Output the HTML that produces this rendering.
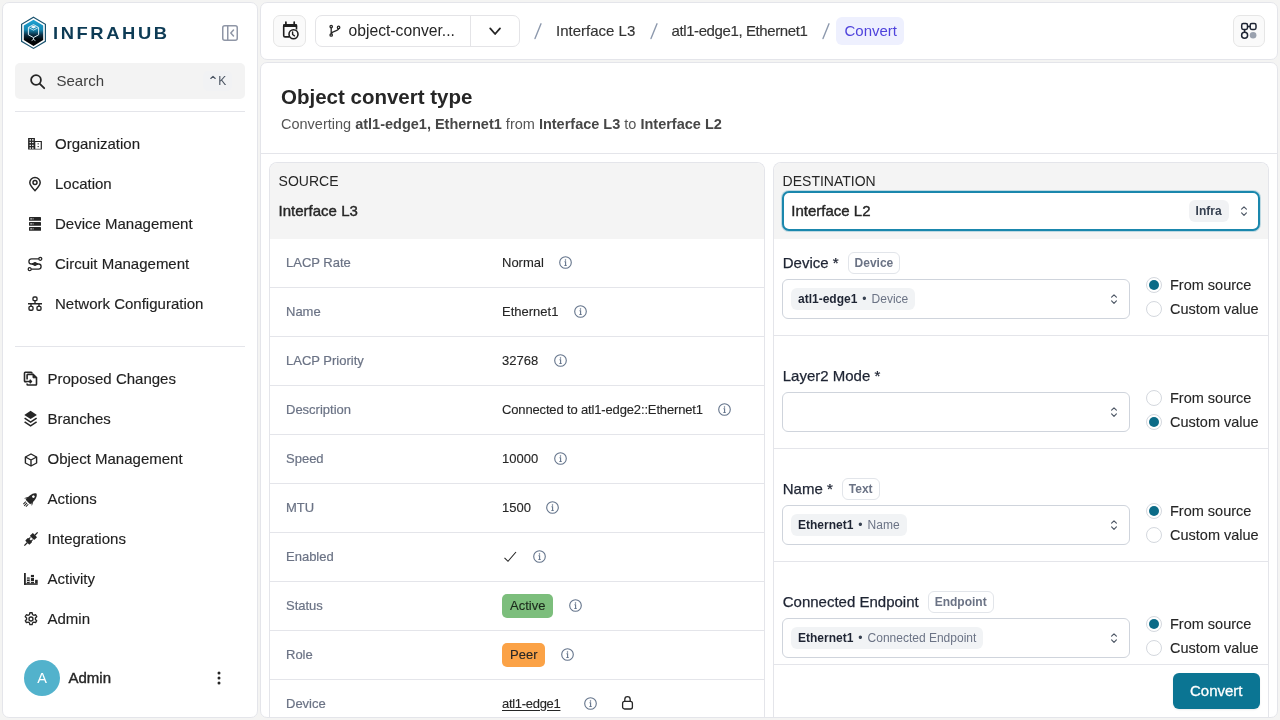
<!DOCTYPE html>
<html><head><meta charset="utf-8">
<style>
*{box-sizing:border-box;margin:0;padding:0}
html,body{width:1280px;height:720px;overflow:hidden;background:#f4f4f3;font-family:"Liberation Sans",sans-serif;color:#262626}
.abs{position:absolute}
#app{position:absolute;left:0;top:0;width:1280px;height:720px;will-change:transform}
.t{position:absolute;white-space:nowrap;line-height:1}
.card{position:absolute;background:#fff;border:1px solid #e4e5ea;border-radius:7px;overflow:hidden}
svg{position:absolute;display:block}
.nav{font-size:15px;color:#1f1f1f;-webkit-text-stroke:0.15px #1f1f1f}
.row{position:absolute;left:0;width:494px;height:49px;border-bottom:1px solid #e4e5ea}
.lbl{position:absolute;left:16px;top:17px;font-size:13px;line-height:1;color:#6b7385;white-space:nowrap;-webkit-text-stroke:0.2px #6b7385}
.val{position:absolute;left:232px;top:-1px;height:48px;font-size:13px;line-height:1;color:#262626;white-space:nowrap;display:flex;align-items:center;-webkit-text-stroke:0.12px #262626}
.info{display:inline-block;width:13px;height:13px;margin-left:15.5px;position:relative;top:0.5px}
.flab{font-size:15px;color:#1e2433;-webkit-text-stroke:0.25px #1e2433}
.fb{position:absolute;height:22px;border:1px solid #e2e5ea;border-radius:6px;background:#fff;font-size:12px;font-weight:bold;color:#6b7385;line-height:20px;padding:0 6px;white-space:nowrap}
.chp{position:absolute;left:791px;height:22px;border-radius:6px;background:#f1f3f5;font-size:12px;line-height:22px;padding:0 7px 0 7px;white-space:nowrap;color:#6b7385}
.chp b{color:#1e2433}
.radio{position:absolute;width:16px;height:16px;border-radius:50%;border:1px solid #d4d8de;background:#fff}
.radio.on::after{content:"";position:absolute;left:2px;top:2px;width:10px;height:10px;border-radius:50%;background:#0b6b87}
.rl{font-size:14.5px;color:#262626;-webkit-text-stroke:0.12px #262626}
.divh{position:absolute;left:0;width:494px;height:1px;background:#e4e5ea}
</style></head>
<body><div id="app">

<!-- SIDEBAR -->
<div class="card" style="left:2px;top:2px;width:256px;height:716px;"></div>
<!-- logo -->
<svg style="left:20px;top:16px" width="28" height="34" viewBox="0 0 28 34">
  <defs>
    <linearGradient id="lg1" x1="0" y1="0" x2="0" y2="1">
      <stop offset="0" stop-color="#1ea3d4"/>
      <stop offset="0.38" stop-color="#1688b3"/>
      <stop offset="0.58" stop-color="#0b2d42"/>
      <stop offset="0.75" stop-color="#02070b"/>
      <stop offset="1" stop-color="#000"/>
    </linearGradient>
  </defs>
  <path d="M13.5 1.2 L25.4 8.3 V25.3 L13.5 32.4 L1.6 25.3 V8.3 Z" fill="#fff" stroke="#1b5470" stroke-width="1.2"/>
  <path d="M13.5 3.7 L23.2 9.5 V24.1 L13.5 29.9 L3.8 24.1 V9.5 Z" fill="url(#lg1)"/>
  <path d="M13.5 8.6 L18.6 11.4 V18.8 L13.5 21.6 L8.4 18.8 V11.4 Z" fill="none" stroke="#dceef5" stroke-width="1"/>
  <path d="M8.4 11.4 L13.5 14.2 L18.6 11.4" fill="none" stroke="#dceef5" stroke-width="0.8"/>
  <path d="M10.6 10.9 L13.5 9.4 L16.4 10.9 L13.5 12.4 Z" fill="#f0f8fb"/>
  <path d="M13.5 21.6 V23.6 M11.6 24.6 L13.5 23.4 L15.4 24.6" fill="none" stroke="#dceef5" stroke-width="0.9"/>
</svg>
<div class="t" style="left:53px;top:24.5px;font-size:17px;font-weight:bold;letter-spacing:2.4px;color:#0d3b55;transform:scaleX(1.08);transform-origin:0 0">INFRAHUB</div>
<!-- collapse -->
<svg style="left:221px;top:24px" width="18" height="18" viewBox="0 0 18 18" fill="none" stroke="#8f96a6" stroke-width="1.5">
  <rect x="1.75" y="1.75" width="14.5" height="14.5" rx="2"/>
  <path d="M6.75 1.75 V16.25"/>
  <path d="M12.5 6 L9.8 9 L12.5 12" stroke-linecap="round" stroke-linejoin="round"/>
</svg>
<!-- search -->
<div class="abs" style="left:15px;top:63px;width:230px;height:36px;background:#f3f3f3;border-radius:5px"></div>
<svg style="left:29px;top:73px" width="17" height="17" viewBox="0 0 17 17" fill="none" stroke="#262626" stroke-width="1.8">
  <circle cx="7" cy="7" r="4.9"/>
  <path d="M10.6 10.6 L15.2 15.2" stroke-linecap="round"/>
</svg>
<div class="t" style="left:56.5px;top:73.3px;font-size:15px;color:#404040">Search</div>
<div class="abs" style="left:203px;top:71px;width:29px;height:20px;background:#f1f2f4;border-radius:5px"></div>
<svg style="left:209px;top:74px" width="8" height="6" viewBox="209 74 8 6" fill="none" stroke="#4b5563" stroke-width="1.15" stroke-linecap="round" stroke-linejoin="round"><path d="M210.8 78.5 L213 76.3 L215.2 78.5"/></svg>
<div class="t" style="left:218.3px;top:74.6px;font-size:12px;color:#4b5563">K</div>
<div class="abs" style="left:15px;top:111px;width:230px;height:1px;background:#e4e5ea"></div>

<!-- nav top -->
<svg style="left:27px;top:137px" width="16" height="14" viewBox="27 137 16 14">
  <path d="M28.1 137.9 H34.9 V140.9 H41.9 V149.6 H28.1 Z" fill="#262626"/>
  <rect x="35.3" y="142" width="5.4" height="6.8" fill="#fff"/>
  <g fill="#fff">
    <rect x="29.6" y="139.1" width="1.3" height="1.5"/><rect x="32.1" y="139.1" width="1.4" height="1.5"/>
    <rect x="29.6" y="141.9" width="1.3" height="1.2"/><rect x="32.1" y="141.9" width="1.4" height="1.2"/>
    <rect x="29.6" y="144.7" width="1.3" height="1.3"/><rect x="32.1" y="144.7" width="1.4" height="1.3"/>
    <rect x="29.6" y="147.3" width="1.3" height="1.5"/><rect x="32.1" y="147.3" width="1.4" height="1.5"/>
  </g>
  <rect x="37.6" y="143.3" width="1.2" height="1.1" fill="#262626"/><rect x="37.6" y="146" width="1.2" height="1.1" fill="#262626"/>
</svg>
<div class="t nav" style="left:55px;top:136.1px">Organization</div>

<svg style="left:28px;top:176px" width="14" height="16" viewBox="0 0 14 16" fill="none" stroke="#262626" stroke-width="1.5">
  <path d="M7 14.6 C4.8 12.4 1.8 9.6 1.8 6.6 A5.2 5.2 0 0 1 12.2 6.6 C12.2 9.6 9.2 12.4 7 14.6 Z" stroke-linejoin="round"/>
  <circle cx="7" cy="6.6" r="2"/>
</svg>
<div class="t nav" style="left:55px;top:176.1px">Location</div>

<svg style="left:29px;top:216px" width="12" height="16" viewBox="0 0 12 16">
  <g fill="#262626"><rect x="0" y="1" width="12" height="3.8" rx="0.6"/><rect x="0" y="6" width="12" height="3.8" rx="0.6"/><rect x="0" y="11" width="12" height="3.8" rx="0.6"/></g>
  <g fill="#fff"><rect x="1.3" y="2.4" width="1.6" height="1"/><rect x="3.6" y="2.4" width="0.9" height="1"/><rect x="1.3" y="7.4" width="1.6" height="1"/><rect x="3.6" y="7.4" width="0.9" height="1"/><rect x="1.3" y="12.4" width="1.6" height="1"/><rect x="3.6" y="12.4" width="0.9" height="1"/></g>
</svg>
<div class="t nav" style="left:55px;top:216.1px">Device Management</div>

<svg style="left:27px;top:256px" width="16" height="16" viewBox="0 0 16 16" fill="none" stroke="#262626" stroke-width="1.3">
  <circle cx="13.3" cy="2.8" r="1.5"/>
  <circle cx="2.7" cy="13.2" r="1.5"/>
  <path d="M11.8 2.8 H4.5 A2.6 2.6 0 0 0 4.5 8 H11.5 A2.6 2.6 0 0 1 11.5 13.2 H4.2"/>
  <circle cx="8" cy="8" r="1.4" fill="#262626"/>
  <path d="M5 8 H11" stroke-width="1.8"/>
</svg>
<div class="t nav" style="left:55px;top:256.1px">Circuit Management</div>

<svg style="left:27px;top:296px" width="16" height="16" viewBox="0 0 16 16" fill="none" stroke="#262626" stroke-width="1.4">
  <rect x="6" y="1" width="4" height="3.6" rx="1.2"/>
  <path d="M8 4.6 V7.7 M1 7.7 H15 M4 7.7 V10 M12 7.7 V10"/>
  <rect x="2" y="10.4" width="4" height="3.8" rx="1.2"/>
  <rect x="10" y="10.4" width="4" height="3.8" rx="1.2"/>
</svg>
<div class="t nav" style="left:55px;top:296.1px">Network Configuration</div>

<div class="abs" style="left:15px;top:346px;width:230px;height:1px;background:#e4e5ea"></div>

<!-- nav bottom -->
<svg style="left:22px;top:370px" width="17" height="18" viewBox="22 370 17 18" fill="none" stroke="#262626" stroke-width="1.6">
  <path d="M31.9 373.4 V372.9 Q31.9 372.2 31.2 372.2 H25.2 Q24.5 372.2 24.5 372.9 V381.1 Q24.5 381.8 25.2 381.8 H26.6"/>
  <path d="M27.1 379.6 V375.1 Q27.1 374.4 27.8 374.4 H33.1 L36.5 377.6 V384.3 Q36.5 385 35.8 385 H27.8 Q27.1 385 27.1 384.3 V383.4"/>
  <path d="M33 374.4 L36.5 377.8 H33 Z" fill="#262626" stroke-width="1"/>
  <path d="M25.2 381.5 H31.4 M29.7 379.7 L31.5 381.5 L29.7 383.3" stroke-width="1.5" stroke-linejoin="round"/>
</svg>
<div class="t nav" style="left:47.5px;top:371.1px">Proposed Changes</div>

<svg style="left:22px;top:409px" width="17" height="19" viewBox="22 409 17 19">
  <path d="M30.6 410.8 L36.9 414.9 L30.6 419 L24.3 414.9 Z" fill="#262626"/>
  <path d="M24.6 418.2 L30.6 422.1 L36.6 418.2 M24.6 421.9 L30.6 425.8 L36.6 421.9" fill="none" stroke="#262626" stroke-width="1.6" stroke-linejoin="miter"/>
</svg>
<div class="t nav" style="left:47.5px;top:411.1px">Branches</div>

<svg style="left:24px;top:453px" width="14" height="14" viewBox="0 0 14 14" fill="none" stroke="#262626" stroke-width="1.4" stroke-linejoin="round">
  <path d="M7 1 L12.6 4 V10 L7 13 L1.4 10 V4 Z"/>
  <path d="M1.4 4 L7 7 L12.6 4 M7 7 V13"/>
</svg>
<div class="t nav" style="left:47.5px;top:451.1px">Object Management</div>

<svg style="left:22px;top:490px" width="18" height="18" viewBox="-9 -9 18 18">
  <g transform="rotate(-45)">
    <path d="M-4.4 -3.2 C1 -3.9 6.2 -3.4 7.8 0 C6.2 3.4 1 3.9 -4.4 3.2 Z" fill="#262626"/>
    <circle cx="3.4" cy="0" r="1.35" fill="#fff"/>
    <path d="M-2.6 -3 L-4.4 -5.6 L-0.2 -3.5 Z M-2.6 3 L-4.4 5.6 L-0.2 3.5 Z" fill="#262626"/>
    <path d="M-5.6 -1.8 H-9 M-5.6 0 H-9.6 M-5.6 1.8 H-9" stroke="#262626" stroke-width="1"/>
  </g>
</svg>
<div class="t nav" style="left:47.5px;top:491.1px">Actions</div>

<svg style="left:22px;top:530px" width="18" height="18" viewBox="-9 -9 18 18">
  <g transform="rotate(-45)" fill="#262626">
    <rect x="-9.4" y="-0.65" width="4.4" height="1.3"/>
    <rect x="-5.2" y="-2.9" width="4" height="5.8" rx="0.4"/>
    <rect x="-1.4" y="-2.2" width="2.2" height="1.2"/>
    <rect x="-1.4" y="1" width="2.2" height="1.2"/>
    <rect x="1.4" y="-3" width="4.2" height="6" rx="0.4"/>
    <rect x="5.4" y="-0.65" width="4" height="1.3"/>
  </g>
</svg>
<div class="t nav" style="left:47.5px;top:531.1px">Integrations</div>

<svg style="left:23px;top:572px" width="16" height="14" viewBox="23 572 16 14" fill="#262626">
  <rect x="24" y="573" width="1.8" height="11.8"/>
  <rect x="24" y="583.3" width="13.7" height="1.5"/>
  <rect x="26.9" y="577.4" width="2.8" height="6"/>
  <rect x="30.9" y="574.9" width="3.1" height="8.5"/>
  <rect x="35.1" y="579.8" width="2.6" height="3.6"/>
  <g fill="#fff"><rect x="26.9" y="578.7" width="2.8" height="0.8"/><rect x="26.9" y="581.1" width="2.8" height="0.8"/><rect x="30.9" y="577.2" width="3.1" height="0.8"/><rect x="30.9" y="581" width="3.1" height="0.8"/></g>
</svg>
<div class="t nav" style="left:47.5px;top:571.1px">Activity</div>

<svg style="left:23px;top:611px" width="16" height="16" viewBox="0 0 24 24" fill="none" stroke="#262626" stroke-width="2">
  <path d="M10.3 2.6 h3.4 l0.6 2.7 a7.5 7.5 0 0 1 2 1.15 l2.6 -0.85 l1.7 2.95 l-2.05 1.85 a7.5 7.5 0 0 1 0 2.3 l2.05 1.85 l-1.7 2.95 l-2.6 -0.85 a7.5 7.5 0 0 1 -2 1.15 l-0.6 2.7 h-3.4 l-0.6 -2.7 a7.5 7.5 0 0 1 -2 -1.15 l-2.6 0.85 l-1.7 -2.95 l2.05 -1.85 a7.5 7.5 0 0 1 0 -2.3 l-2.05 -1.85 l1.7 -2.95 l2.6 0.85 a7.5 7.5 0 0 1 2 -1.15 Z" stroke-linejoin="round"/>
  <circle cx="12" cy="12" r="3"/>
</svg>
<div class="t nav" style="left:47.5px;top:611.1px">Admin</div>

<!-- user -->
<div class="abs" style="left:24px;top:660px;width:36px;height:36px;border-radius:50%;background:#52b2cc"></div>
<div class="t" style="left:24px;top:671px;width:36px;text-align:center;font-size:14.5px;color:#fff">A</div>
<div class="t" style="left:68.5px;top:670.4px;font-size:15px;color:#262626;-webkit-text-stroke:0.4px #262626">Admin</div>
<svg style="left:216px;top:670px" width="6" height="16" viewBox="0 0 6 16" fill="#262626">
  <circle cx="3" cy="3" r="1.5"/><circle cx="3" cy="8" r="1.5"/><circle cx="3" cy="13" r="1.5"/>
</svg>


<!-- HEADER -->
<div class="card" style="left:260px;top:2px;width:1018px;height:58px;"></div>
<!-- header -->
<div class="abs" style="left:273px;top:15px;width:33px;height:32px;border:1px solid #e6e6e6;border-radius:7px;background:#fafafa"></div>
<svg style="left:280px;top:20px" width="20" height="21" viewBox="280 20 20 21" fill="none" stroke="#1f1f1f" stroke-width="1.6">
  <path d="M289.5 36.9 H285.1 A1.4 1.4 0 0 1 283.7 35.5 V26.2 A1.4 1.4 0 0 1 285.1 24.8 H295.1 A1.4 1.4 0 0 1 296.5 26.2 V29.5"/>
  <rect x="283" y="24.2" width="14.2" height="2.9" fill="#1f1f1f" stroke="none" rx="0.8"/>
  <path d="M285.9 22 V24.6 M294.2 22 V24.6" stroke-width="1.7" stroke-linecap="round"/>
  <circle cx="293.5" cy="34.2" r="4.5" fill="#fafafa"/>
  <path d="M292.6 32 V34.5 L294.5 35.8" stroke-width="1.4" stroke-linecap="round" stroke-linejoin="round"/>
</svg>

<div class="abs" style="left:315px;top:15px;width:205px;height:32px;border:1px solid #e4e4e7;border-radius:7px;background:#fff"></div>
<div class="abs" style="left:470px;top:16px;width:1px;height:30px;background:#e4e4e7"></div>
<svg style="left:328px;top:24px" width="14" height="14" viewBox="328 24 14 14" fill="none" stroke="#262626" stroke-width="1.3" stroke-linecap="round">
  <circle cx="331.2" cy="26.6" r="1.2"/>
  <circle cx="331.2" cy="35" r="1.2"/>
  <circle cx="338.6" cy="27.4" r="1.2"/>
  <path d="M331.2 27.8 V33.8 M338.6 28.6 C338.6 31.4 332 30.8 331.4 33.6"/>
</svg>
<div class="t" style="left:348.5px;top:22.6px;font-size:15.7px;color:#262626">object-conver...</div>
<svg style="left:488px;top:26px" width="14" height="10" viewBox="0 0 14 10" fill="none" stroke="#262626" stroke-width="1.8" stroke-linecap="round" stroke-linejoin="round">
  <path d="M2.2 2.4 L7.1 8 L12 2.4"/>
</svg>

<svg style="left:533px;top:22px" width="10" height="18" viewBox="0 0 10 18" fill="none" stroke="#8d99ad" stroke-width="1.4" stroke-linecap="round"><path d="M8 1.8 L2 16.6"/></svg>
<div class="t" style="left:556px;top:23.1px;font-size:15px;color:#333;-webkit-text-stroke:0.15px #333">Interface L3</div>
<svg style="left:649px;top:22px" width="10" height="18" viewBox="0 0 10 18" fill="none" stroke="#8d99ad" stroke-width="1.4" stroke-linecap="round"><path d="M8 1.8 L2 16.6"/></svg>
<div class="t" style="left:671.5px;top:23.1px;font-size:15px;letter-spacing:-0.4px;color:#333;-webkit-text-stroke:0.15px #333">atl1-edge1, Ethernet1</div>
<svg style="left:821px;top:22px" width="10" height="18" viewBox="0 0 10 18" fill="none" stroke="#8d99ad" stroke-width="1.4" stroke-linecap="round"><path d="M8 1.8 L2 16.6"/></svg>
<div class="abs" style="left:836px;top:17px;width:68px;height:28px;border-radius:6px;background:#eef0fe"></div>
<div class="t" style="left:844.5px;top:23.1px;font-size:15px;color:#4f43dc">Convert</div>

<div class="abs" style="left:1233px;top:15px;width:32px;height:32px;border:1px solid #e6e6e6;border-radius:7px;background:#fafafa"></div>
<svg style="left:1240px;top:22px" width="18" height="18" viewBox="0 0 18 18" fill="none" stroke="#1e2433" stroke-width="1.5">
  <rect x="1.7" y="1.6" width="5.8" height="5.8" rx="1.6"/>
  <rect x="10.2" y="1.6" width="5.8" height="5.8" rx="1.6"/>
  <path d="M7.5 4.5 H10.2 M4.6 7.4 V10"/>
  <circle cx="4.6" cy="13.3" r="3"/>
  <circle cx="13.1" cy="13.2" r="3.3" fill="#9aa1ae" stroke="none"/>
</svg>


<!-- MAIN -->
<div class="card" style="left:260px;top:62px;width:1018px;height:656px;"></div>
<!-- main header -->
<div class="t" style="left:281px;top:86.7px;font-size:20.5px;font-weight:bold;color:#262626">Object convert type</div>
<div class="t" style="left:281px;top:116.6px;font-size:14.5px;color:#555">Converting <b style="color:#474747">atl1-edge1, Ethernet1</b> from <b style="color:#474747">Interface L3</b> to <b style="color:#474747">Interface L2</b></div>
<div class="abs" style="left:261px;top:153px;width:1016px;height:1px;background:#e4e5ea"></div>
<!-- source panel -->
<div class="abs" style="left:269px;top:162px;width:496px;height:555px;border:1px solid #e4e5ea;border-bottom:none;border-radius:8px 8px 0 0;background:#fff;overflow:hidden">
  <div class="abs" style="left:0;top:0;width:494px;height:76px;background:#f4f4f4"></div>
  <div class="t" style="left:8.6px;top:11.15px;font-size:14px;color:#262626">SOURCE</div>
  <div class="t" style="left:8.6px;top:40.1px;font-size:15px;color:#262626;-webkit-text-stroke:0.4px #262626">Interface L3</div>

  <div class="row" style="top:76px"><div class="lbl">LACP Rate</div><div class="val">Normal<svg class="info" viewBox="0 0 13 13" style="position:relative;display:inline-block" fill="none" stroke="#64748b" stroke-width="1.1"><circle cx="6.5" cy="6.5" r="5.8"/><path d="M5.5 5.7 H6.6 V9.5 M5.4 9.5 H7.7" stroke-width="1.1"/><circle cx="6.5" cy="3.9" r="0.5" fill="#64748b" stroke="#64748b" stroke-width="0.5"/></svg></div></div>
  <div class="row" style="top:125px"><div class="lbl">Name</div><div class="val">Ethernet1<svg class="info" viewBox="0 0 13 13" style="position:relative;display:inline-block" fill="none" stroke="#64748b" stroke-width="1.1"><circle cx="6.5" cy="6.5" r="5.8"/><path d="M5.5 5.7 H6.6 V9.5 M5.4 9.5 H7.7" stroke-width="1.1"/><circle cx="6.5" cy="3.9" r="0.5" fill="#64748b" stroke="#64748b" stroke-width="0.5"/></svg></div></div>
  <div class="row" style="top:174px"><div class="lbl">LACP Priority</div><div class="val">32768<svg class="info" viewBox="0 0 13 13" style="position:relative;display:inline-block" fill="none" stroke="#64748b" stroke-width="1.1"><circle cx="6.5" cy="6.5" r="5.8"/><path d="M5.5 5.7 H6.6 V9.5 M5.4 9.5 H7.7" stroke-width="1.1"/><circle cx="6.5" cy="3.9" r="0.5" fill="#64748b" stroke="#64748b" stroke-width="0.5"/></svg></div></div>
  <div class="row" style="top:223px"><div class="lbl">Description</div><div class="val"><span style="letter-spacing:-0.15px">Connected to atl1-edge2::Ethernet1</span><svg class="info" viewBox="0 0 13 13" style="position:relative;display:inline-block" fill="none" stroke="#64748b" stroke-width="1.1"><circle cx="6.5" cy="6.5" r="5.8"/><path d="M5.5 5.7 H6.6 V9.5 M5.4 9.5 H7.7" stroke-width="1.1"/><circle cx="6.5" cy="3.9" r="0.5" fill="#64748b" stroke="#64748b" stroke-width="0.5"/></svg></div></div>
  <div class="row" style="top:272px"><div class="lbl">Speed</div><div class="val">10000<svg class="info" viewBox="0 0 13 13" style="position:relative;display:inline-block" fill="none" stroke="#64748b" stroke-width="1.1"><circle cx="6.5" cy="6.5" r="5.8"/><path d="M5.5 5.7 H6.6 V9.5 M5.4 9.5 H7.7" stroke-width="1.1"/><circle cx="6.5" cy="3.9" r="0.5" fill="#64748b" stroke="#64748b" stroke-width="0.5"/></svg></div></div>
  <div class="row" style="top:321px"><div class="lbl">MTU</div><div class="val">1500<svg class="info" viewBox="0 0 13 13" style="position:relative;display:inline-block" fill="none" stroke="#64748b" stroke-width="1.1"><circle cx="6.5" cy="6.5" r="5.8"/><path d="M5.5 5.7 H6.6 V9.5 M5.4 9.5 H7.7" stroke-width="1.1"/><circle cx="6.5" cy="3.9" r="0.5" fill="#64748b" stroke="#64748b" stroke-width="0.5"/></svg></div></div>
  <div class="row" style="top:370px"><div class="lbl">Enabled</div><div class="val"><svg width="14" height="12" viewBox="0 0 14 12" style="position:relative;display:inline-block;top:1px;margin-left:1px" fill="none" stroke="#262626" stroke-width="1.1"><path d="M1.5 6.8 L5 10.3 L13 1"/></svg><svg class="info" viewBox="0 0 13 13" style="position:relative;display:inline-block" fill="none" stroke="#64748b" stroke-width="1.1"><circle cx="6.5" cy="6.5" r="5.8"/><path d="M5.5 5.7 H6.6 V9.5 M5.4 9.5 H7.7" stroke-width="1.1"/><circle cx="6.5" cy="3.9" r="0.5" fill="#64748b" stroke="#64748b" stroke-width="0.5"/></svg></div></div>
  <div class="row" style="top:419px"><div class="lbl">Status</div><div class="val"><span style="display:inline-block;background:#7cbe7c;border-radius:5px;padding:0 8px;height:24px;line-height:24px;color:#1a2a1a;position:relative;top:1px">Active</span><svg class="info" viewBox="0 0 13 13" style="position:relative;display:inline-block" fill="none" stroke="#64748b" stroke-width="1.1"><circle cx="6.5" cy="6.5" r="5.8"/><path d="M5.5 5.7 H6.6 V9.5 M5.4 9.5 H7.7" stroke-width="1.1"/><circle cx="6.5" cy="3.9" r="0.5" fill="#64748b" stroke="#64748b" stroke-width="0.5"/></svg></div></div>
  <div class="row" style="top:468px"><div class="lbl">Role</div><div class="val"><span style="display:inline-block;background:#fba246;border-radius:5px;padding:0 8px;height:24px;line-height:24px;color:#262626;position:relative;top:1px">Peer</span><svg class="info" viewBox="0 0 13 13" style="position:relative;display:inline-block" fill="none" stroke="#64748b" stroke-width="1.1"><circle cx="6.5" cy="6.5" r="5.8"/><path d="M5.5 5.7 H6.6 V9.5 M5.4 9.5 H7.7" stroke-width="1.1"/><circle cx="6.5" cy="3.9" r="0.5" fill="#64748b" stroke="#64748b" stroke-width="0.5"/></svg></div></div>
  <div class="row" style="top:517px"><div class="lbl">Device</div><div class="val"><span style="text-decoration:underline;text-underline-offset:2px;letter-spacing:-0.3px;margin-right:8px">atl1-edge1</span><svg class="info" viewBox="0 0 13 13" style="position:relative;display:inline-block" fill="none" stroke="#64748b" stroke-width="1.1"><circle cx="6.5" cy="6.5" r="5.8"/><path d="M5.5 5.7 H6.6 V9.5 M5.4 9.5 H7.7" stroke-width="1.1"/><circle cx="6.5" cy="3.9" r="0.5" fill="#64748b" stroke="#64748b" stroke-width="0.5"/></svg><svg width="13" height="15" viewBox="0 0 13 15" style="position:relative;display:inline-block;margin-left:24px;top:-0.5px" fill="none" stroke="#262626" stroke-width="1.3"><rect x="1.6" y="6.4" width="9.8" height="7.6" rx="2"/><path d="M3.8 6.4 V4.4 A2.7 2.7 0 0 1 9.2 4.4 V6.4"/></svg></div></div>
</div>

<!-- dest panel -->
<div class="abs" style="left:773px;top:162px;width:496px;height:555px;border:1px solid #e4e5ea;border-bottom:none;border-radius:8px 8px 0 0;background:#fff"></div>
<div class="abs" style="left:774px;top:163px;width:494px;height:76px;background:#f4f4f4;border-radius:7px 7px 0 0"></div>
<div class="t" style="left:782.6px;top:174.15px;font-size:14px;color:#262626">DESTINATION</div>
<div class="abs" style="left:782px;top:191px;width:478px;height:40px;border:2px solid #1a87ad;border-radius:7px;background:#fff;box-shadow:0 0 0 1px rgba(26,135,173,0.25)"></div>
<div class="t" style="left:791.3px;top:203.2px;font-size:15px;color:#262626;-webkit-text-stroke:0.4px #262626">Interface L2</div>
<div class="abs" style="left:1189px;top:200px;width:40px;height:22px;background:#f1f2f4;border-radius:6px"></div>
<div class="t" style="left:1195.6px;top:205px;font-size:12px;font-weight:bold;color:#374151">Infra</div>

<svg style="left:1240px;top:205px" width="8" height="12" viewBox="0 0 8 12" fill="none" stroke="#4b5563" stroke-width="1.15" stroke-linecap="round" stroke-linejoin="round"><path d="M1.6 4.2 L4 1.8 L6.4 4.2 M1.6 7.9 L4 10.3 L6.4 7.9"/></svg>
<div class="t flab" style="left:782.75px;top:255.20px">Device *</div>
<div class="fb" style="left:847.6px;top:252px">Device</div>
<div class="abs" style="left:782px;top:279px;width:348px;height:40px;border:1px solid #cfd4dc;border-radius:6px;background:#fff"></div>
<svg style="left:1110px;top:293px" width="8" height="12" viewBox="0 0 8 12" fill="none" stroke="#4b5563" stroke-width="1.15" stroke-linecap="round" stroke-linejoin="round"><path d="M1.6 4.2 L4 1.8 L6.4 4.2 M1.6 7.9 L4 10.3 L6.4 7.9"/></svg>
<div class="chp" style="top:288px"><b>atl1-edge1</b><span style="margin:0 5px;color:#374151">&bull;</span>Device</div>
<div class="radio on" style="left:1146px;top:277px"></div>
<div class="radio" style="left:1146px;top:301px"></div>
<div class="t rl" style="left:1170px;top:277.60px">From source</div>
<div class="t rl" style="left:1170px;top:301.60px">Custom value</div>
<div class="abs" style="left:774px;top:335px;width:494px;height:1px;background:#e4e5ea"></div>
<div class="t flab" style="left:782.75px;top:368.20px">Layer2 Mode *</div>
<div class="abs" style="left:782px;top:392px;width:348px;height:40px;border:1px solid #cfd4dc;border-radius:6px;background:#fff"></div>
<svg style="left:1110px;top:406px" width="8" height="12" viewBox="0 0 8 12" fill="none" stroke="#4b5563" stroke-width="1.15" stroke-linecap="round" stroke-linejoin="round"><path d="M1.6 4.2 L4 1.8 L6.4 4.2 M1.6 7.9 L4 10.3 L6.4 7.9"/></svg>
<div class="radio" style="left:1146px;top:390px"></div>
<div class="radio on" style="left:1146px;top:414px"></div>
<div class="t rl" style="left:1170px;top:390.60px">From source</div>
<div class="t rl" style="left:1170px;top:414.60px">Custom value</div>
<div class="abs" style="left:774px;top:448px;width:494px;height:1px;background:#e4e5ea"></div>
<div class="t flab" style="left:782.75px;top:481.20px">Name *</div>
<div class="fb" style="left:841.8px;top:478px">Text</div>
<div class="abs" style="left:782px;top:505px;width:348px;height:40px;border:1px solid #cfd4dc;border-radius:6px;background:#fff"></div>
<svg style="left:1110px;top:519px" width="8" height="12" viewBox="0 0 8 12" fill="none" stroke="#4b5563" stroke-width="1.15" stroke-linecap="round" stroke-linejoin="round"><path d="M1.6 4.2 L4 1.8 L6.4 4.2 M1.6 7.9 L4 10.3 L6.4 7.9"/></svg>
<div class="chp" style="top:514px"><b>Ethernet1</b><span style="margin:0 5px;color:#374151">&bull;</span>Name</div>
<div class="radio on" style="left:1146px;top:503px"></div>
<div class="radio" style="left:1146px;top:527px"></div>
<div class="t rl" style="left:1170px;top:503.60px">From source</div>
<div class="t rl" style="left:1170px;top:527.60px">Custom value</div>
<div class="abs" style="left:774px;top:561px;width:494px;height:1px;background:#e4e5ea"></div>
<div class="t flab" style="left:782.75px;top:594.20px">Connected Endpoint</div>
<div class="fb" style="left:927.7px;top:591px">Endpoint</div>
<div class="abs" style="left:782px;top:618px;width:348px;height:40px;border:1px solid #cfd4dc;border-radius:6px;background:#fff"></div>
<svg style="left:1110px;top:632px" width="8" height="12" viewBox="0 0 8 12" fill="none" stroke="#4b5563" stroke-width="1.15" stroke-linecap="round" stroke-linejoin="round"><path d="M1.6 4.2 L4 1.8 L6.4 4.2 M1.6 7.9 L4 10.3 L6.4 7.9"/></svg>
<div class="chp" style="top:627px"><b>Ethernet1</b><span style="margin:0 5px;color:#374151">&bull;</span>Connected Endpoint</div>
<div class="radio on" style="left:1146px;top:616px"></div>
<div class="radio" style="left:1146px;top:640px"></div>
<div class="t rl" style="left:1170px;top:616.60px">From source</div>
<div class="t rl" style="left:1170px;top:640.60px">Custom value</div>
<div class="abs" style="left:774px;top:664px;width:494px;height:1px;background:#e4e5ea"></div>
<div class="abs" style="left:1173px;top:673px;width:87px;height:36px;border-radius:6px;background:#0b7593;box-shadow:0 1px 2px rgba(0,0,0,0.08)"></div>
<div class="t" style="left:1190px;top:683.2px;font-size:15px;color:#fff;-webkit-text-stroke:0.3px #fff">Convert</div>
</div></body></html>
